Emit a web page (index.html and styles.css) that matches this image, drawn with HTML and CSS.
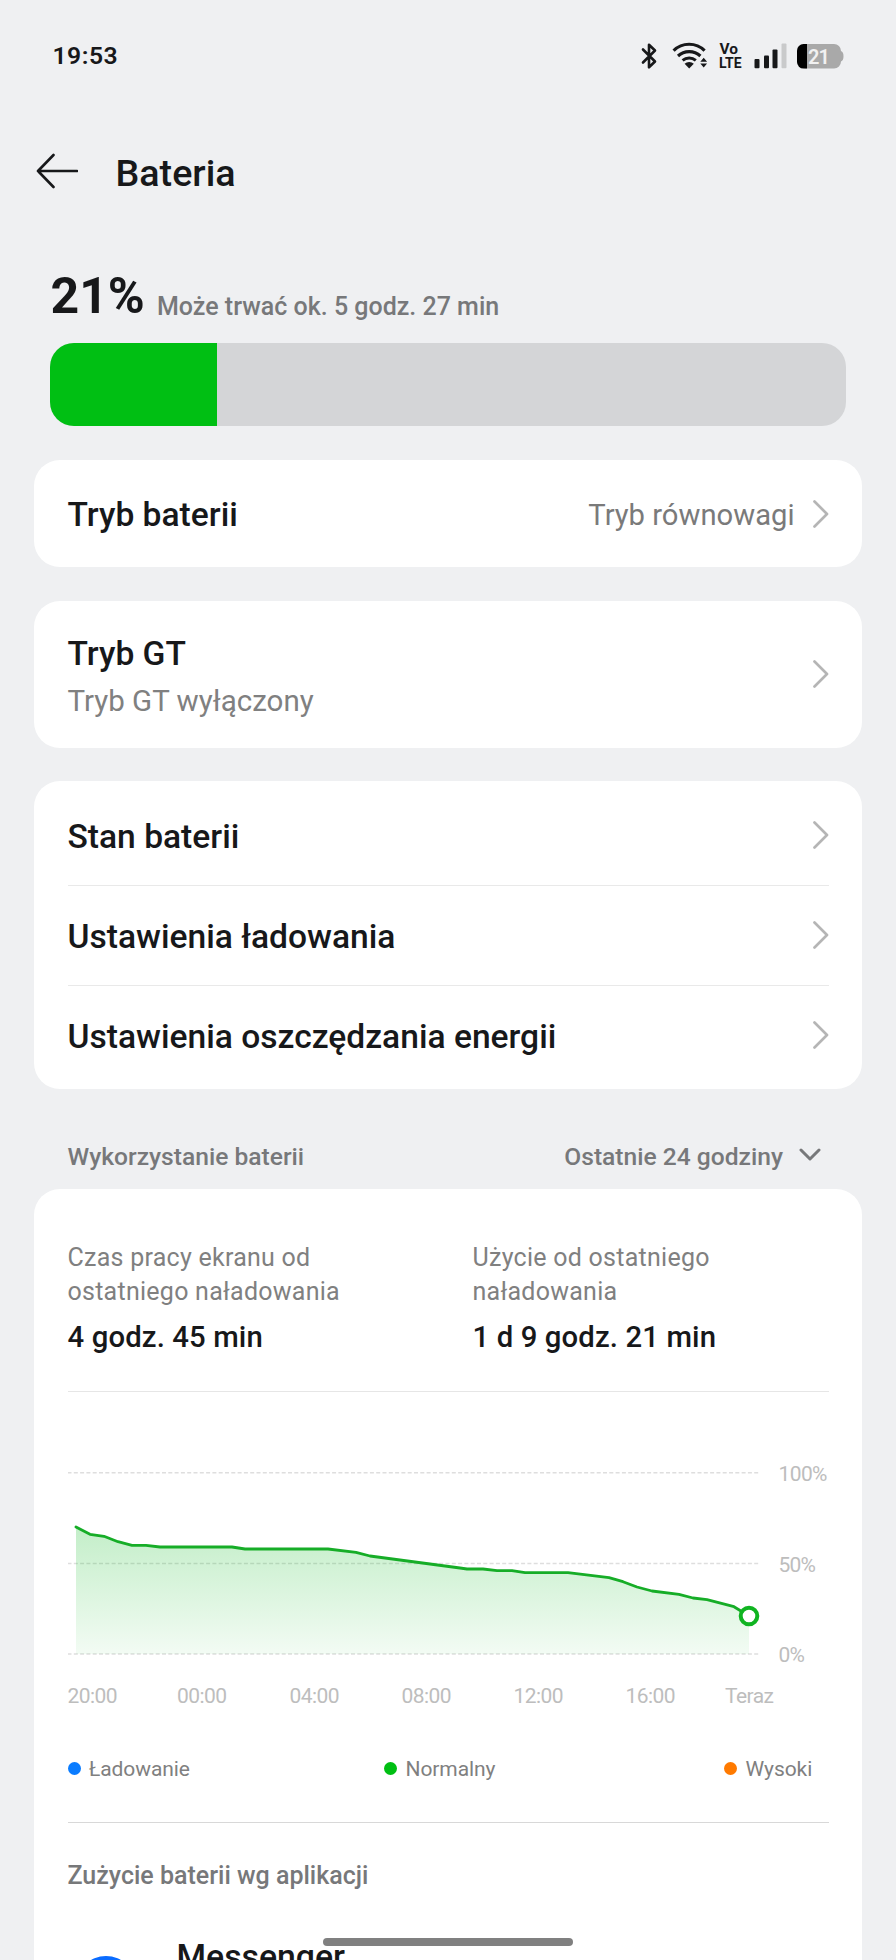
FILE: index.html
```html
<!DOCTYPE html>
<html lang="pl">
<head>
<meta charset="utf-8">
<title>Bateria</title>
<link rel="stylesheet" href="styles.css">
</head>
<body>
<div class="screen">
  <div class="status">
    <span class="clock">19:53</span>
    <svg class="status-icons" width="210" height="40" viewBox="635 36 210 40">
      <path class="bt" d="M643 49.5 655 61.5 649 67.3V44.7L655 50.5 643 62.5"/>
      <g class="wifi">
        <path d="M673.6 50.6a22 22 0 0 1 31 0"/>
        <path d="M678 56a16.5 16.5 0 0 1 22.4 0"/>
        <path d="M682.600 60.400a10.500 10.500 0 0 1 13.200 0"/>
      </g>
      <path d="M689.2 68.400 684.600 63.800a6.500 6.500 0 0 1 9.200 0z" fill="#17181a"/>
      <path d="M703.700 57.700l3.400 4h-6.800zM703.700 67.600l-3.400-4h6.800z" fill="#17181a"/>
      <text class="volte" x="719.500" y="53.500" textLength="18.500" lengthAdjust="spacingAndGlyphs">Vo</text>
      <text class="volte" x="719" y="68.200" textLength="22.500" lengthAdjust="spacingAndGlyphs">LTE</text>
      <rect x="754.500" y="59" width="5" height="9.300" rx="1"/>
      <rect x="764" y="55.500" width="5" height="12.800" rx="1"/>
      <rect x="772.500" y="49.500" width="5" height="18.800" rx="1"/>
      <rect x="781.500" y="43.500" width="5" height="24.800" rx="1" fill="#c9cacb"/>
      <path d="M804.500 44h29.500a7 7 0 0 1 7 7q2.500 1 2.500 5.300t-2.500 5.300a7 7 0 0 1-7 7h-29.500z" fill="#a9a9a9"/>
      <path d="M807 44v24.600h-3.500a6.500 6.500 0 0 1-6.500-6.500v-11.600a6.500 6.500 0 0 1 6.500-6.500z" fill="#000"/>
      <text class="charge" x="808" y="63.500" textLength="22">21</text>
    </svg>
  </div>

  <div class="header">
    <svg class="back" width="42" height="36" viewBox="0 0 42 36"><path class="arrow" d="M17.500 2 2 18 17.500 34M2 18H41"/></svg>
    <h1 class="title">Bateria</h1>
  </div>

  <div class="summary">
    <span class="percent">21%</span>
    <span class="remaining">Może trwać ok. 5 godz. 27 min</span>
  </div>
  <div class="level"><div class="level-fill"></div></div>

  <div class="card mode">
    <span class="label">Tryb baterii</span>
    <span class="value">Tryb równowagi</span>
    <svg class="chev" width="16" height="28" viewBox="0 0 16 28"><path d="M1.500 1.500 14 14 1.500 26.500"/></svg>
  </div>

  <div class="card gt">
    <div class="gt-text">
      <span class="label">Tryb GT</span>
      <span class="sub">Tryb GT wyłączony</span>
    </div>
    <svg class="chev" width="16" height="28" viewBox="0 0 16 28"><path d="M1.500 1.500 14 14 1.500 26.500"/></svg>
  </div>

  <div class="card list">
    <div class="row"><span class="label">Stan baterii</span><svg class="chev" width="16" height="28" viewBox="0 0 16 28"><path d="M1.500 1.500 14 14 1.500 26.500"/></svg></div>
    <div class="row"><span class="label">Ustawienia ładowania</span><svg class="chev" width="16" height="28" viewBox="0 0 16 28"><path d="M1.500 1.500 14 14 1.500 26.500"/></svg></div>
    <div class="row"><span class="label">Ustawienia oszczędzania energii</span><svg class="chev" width="16" height="28" viewBox="0 0 16 28"><path d="M1.500 1.500 14 14 1.500 26.500"/></svg></div>
  </div>

  <div class="section">
    <span>Wykorzystanie baterii</span>
    <span class="range">Ostatnie 24 godziny
      <svg class="caret" width="22" height="14" viewBox="0 0 22 14"><path class="down" d="M2 2 11 11 20 2"/></svg>
    </span>
  </div>

  <div class="card usage">
    <div class="stats">
      <div class="stat">
        <p class="stat-name">Czas pracy ekranu od<br>ostatniego naładowania</p>
        <p class="stat-value">4 godz. 45 min</p>
      </div>
      <div class="stat">
        <p class="stat-name">Użycie od ostatniego<br>naładowania</p>
        <p class="stat-value">1 d 9 godz. 21 min</p>
      </div>
    </div>

    <svg class="chart" width="760" height="320" viewBox="68 1392 760 320">
      <defs>
        <linearGradient id="area" x1="0" y1="1527" x2="0" y2="1654" gradientUnits="userSpaceOnUse">
          <stop offset="0" stop-color="#06b81c" stop-opacity=".24"/>
          <stop offset="1" stop-color="#06b81c" stop-opacity=".05"/>
        </linearGradient>
      </defs>
      <path class="grid" d="M67.500 1472.700H759M67.500 1563.500H759M67.500 1654H759"/>
      <path fill="url(#area)" d="M76 1527 90 1534.300 104 1536.300 118 1541.700 132 1545.300H146L160 1547H232L245 1549H328L356 1552.300 370 1556 460 1568 467 1569H483L497 1570.700H512L525 1572.700H568L609 1577.700 623 1581.700 637 1587 652 1591 679 1594.300 693 1598 707 1599.700 734 1606.700 749 1616V1654H76z"/>
      <path class="line" d="M76 1527 90 1534.300 104 1536.300 118 1541.700 132 1545.300H146L160 1547H232L245 1549H328L356 1552.300 370 1556 460 1568 467 1569H483L497 1570.700H512L525 1572.700H568L609 1577.700 623 1581.700 637 1587 652 1591 679 1594.300 693 1598 707 1599.700 734 1606.700 749 1616"/>
      <circle class="now" cx="749" cy="1616" r="8.300"/>
      <g class="axis">
        <text x="778.500" y="1480.500" textLength="49">100%</text>
        <text x="778.500" y="1571.500" textLength="37.500">50%</text>
        <text x="778.500" y="1661.500" textLength="26.500">0%</text>
        <text x="67.500" y="1703" textLength="50">20:00</text>
        <text x="177" y="1703" textLength="50">00:00</text>
        <text x="289.500" y="1703" textLength="50">04:00</text>
        <text x="401.500" y="1703" textLength="50">08:00</text>
        <text x="513.500" y="1703" textLength="50">12:00</text>
        <text x="625.500" y="1703" textLength="50">16:00</text>
        <text x="725" y="1703" textLength="49">Teraz</text>
      </g>
    </svg>

    <div class="legend">
      <span class="key"><i class="dot blue"></i>Ładowanie</span>
      <span class="key"><i class="dot green"></i>Normalny</span>
      <span class="key"><i class="dot orange"></i>Wysoki</span>
    </div>

    <p class="apps-title">Zużycie baterii wg aplikacji</p>
    <div class="app"><i class="app-icon"></i><span class="app-name">Messenger</span></div>
  </div>
  <div class="home"></div>
</div>
</body>
</html>
```
FILE: styles.css
```css
* { box-sizing: border-box; }
body { margin: 0; background: #eff0f2; font-family: Roboto, "Noto Sans", sans-serif; color: #17181a; }
h1, p { margin: 0; }
svg { display: block; flex: none; }
.screen { position: relative; width: 896px; height: 1960px; overflow: hidden; display: flex; flex-direction: column; }
.screen > * { flex: none; }
.status { height: 112px; padding: 0 51px 0 52.500px; display: flex; align-items: center; justify-content: space-between; }
.clock { padding-bottom: 1px; font-size: 24.700px; font-weight: 600; letter-spacing: .5px; }
.status-icons { fill: #17181a; }
.bt { fill: none; stroke: #17181a; stroke-width: 2.600; stroke-linejoin: round; stroke-linecap: round; }
.wifi path { fill: none; stroke: #17181a; stroke-width: 3.100; }
.volte { font-size: 15px; font-weight: 700; }
.charge { font-size: 20px; font-weight: 600; fill: #f1f1f1; }
.header { height: 120px; padding-left: 36px; display: flex; align-items: center; gap: 37.500px; }
.back { margin-bottom: 2px; }
.arrow { fill: none; stroke: #17181a; stroke-width: 2.600; stroke-linecap: round; stroke-linejoin: round; }
.title { padding-top: 1px; font-size: 37.700px; line-height: 44px; font-weight: 500; }
.summary { height: 111px; padding: 36px 0 0 50.500px; display: flex; align-items: flex-start; }
.percent { font-size: 50px; line-height: 56px; font-weight: 700; width: 106.500px; }
.remaining { font-size: 25px; line-height: 30px; font-weight: 480; color: #77787a; margin-top: 24px; }
.level { margin: 0 50px; height: 82.500px; border-radius: 24px; background: #d4d5d7; overflow: hidden; }
.level-fill { width: 21%; height: 100%; background: #00bf13; }
.card { margin: 33.500px 34px 0; border-radius: 26px; background: #fff; padding: 0 33.500px; }
.label { font-size: 33.600px; line-height: 40px; font-weight: 500; white-space: nowrap; }
.chev { fill: none; stroke: #b5b5b5; stroke-width: 2.700; stroke-linecap: round; stroke-linejoin: round; }
.mode { margin-top: 34.500px; height: 107px; display: flex; align-items: center; }
.mode .label { padding-top: 2px; }
.value { margin: 3px 18px 0 auto; font-size: 29.200px; color: #7a7a7a; }
.gt { height: 147px; display: flex; align-items: center; justify-content: space-between; }
.gt-text { display: flex; flex-direction: column; align-self: flex-start; padding-top: 33px; }
.sub { margin-top: 4px; font-size: 29.500px; line-height: 46px; color: #808080; }
.list { height: 307.500px; padding-top: 4px; padding-bottom: 3px; }
.row { height: 100px; display: flex; align-items: center; justify-content: space-between; }
.row + .row { border-top: 1px solid #e9e9e9; padding-bottom: 1px; }
.row .label { padding-top: 3px; }
.section { height: 100.500px; padding: 51px 75px 0 67.500px; display: flex; justify-content: space-between; align-items: flex-start; font-size: 24.600px; line-height: 34px; font-weight: 500; color: #77787a; }
.range { display: flex; align-items: center; gap: 16px; }
.caret { margin-bottom: 3px; }
.down { fill: none; stroke: #77787a; stroke-width: 3; stroke-linecap: round; stroke-linejoin: round; }
.usage { margin-top: 0; height: 800px; }
.stats { height: 203px; padding-top: 51.500px; display: flex; border-bottom: 1px solid #e6e6e6; }
.stat { width: 405px; flex: none; }
.stat + .stat { width: 355px; }
.stat-name { font-size: 25px; line-height: 34.700px; letter-spacing: .26px; color: #808080; white-space: nowrap; }
.stat-value { margin-top: 9.500px; font-size: 29.300px; line-height: 36px; letter-spacing: .12px; font-weight: 500; }
.chart { font-size: 21px; }
.grid { fill: none; stroke: #dedede; stroke-width: 1.500; stroke-dasharray: 4 2.300; }
.line { fill: none; stroke: #16ad27; stroke-width: 2.800; stroke-linecap: round; stroke-linejoin: round; }
.now { fill: #fff; stroke: #10b421; stroke-width: 4; }
.axis { fill: #bdbdbd; }
.legend { height: 110.500px; padding-top: 42px; border-bottom: 1px solid #d8d8d8; display: grid; grid-template-columns: 316.500px 340px auto; align-content: start; font-size: 21px; line-height: 30px; letter-spacing: -.08px; color: #808080; }
.key { display: flex; align-items: center; gap: 8.500px; height: 30px; }
.dot { width: 13px; height: 13px; border-radius: 50%; margin-top: -2px; }
.blue { background: #0a7cff; }
.green { background: #00bf13; }
.orange { background: #ff7a00; }
.apps-title { margin-top: 38px; font-size: 25px; line-height: 30px; font-weight: 500; color: #77787a; }
.app { margin-top: 45px; display: flex; align-items: flex-start; }
.app-icon { width: 60px; height: 60px; margin: 20px 35px 0 8px; border-radius: 50%; background: #0a6cff; }
.app-name { margin-left: 6px; font-size: 33.800px; line-height: 42px; font-weight: 500; }
.home { position: absolute; left: 323px; top: 1937.500px; width: 250px; height: 8px; border-radius: 4px; background: #808080; }
```
